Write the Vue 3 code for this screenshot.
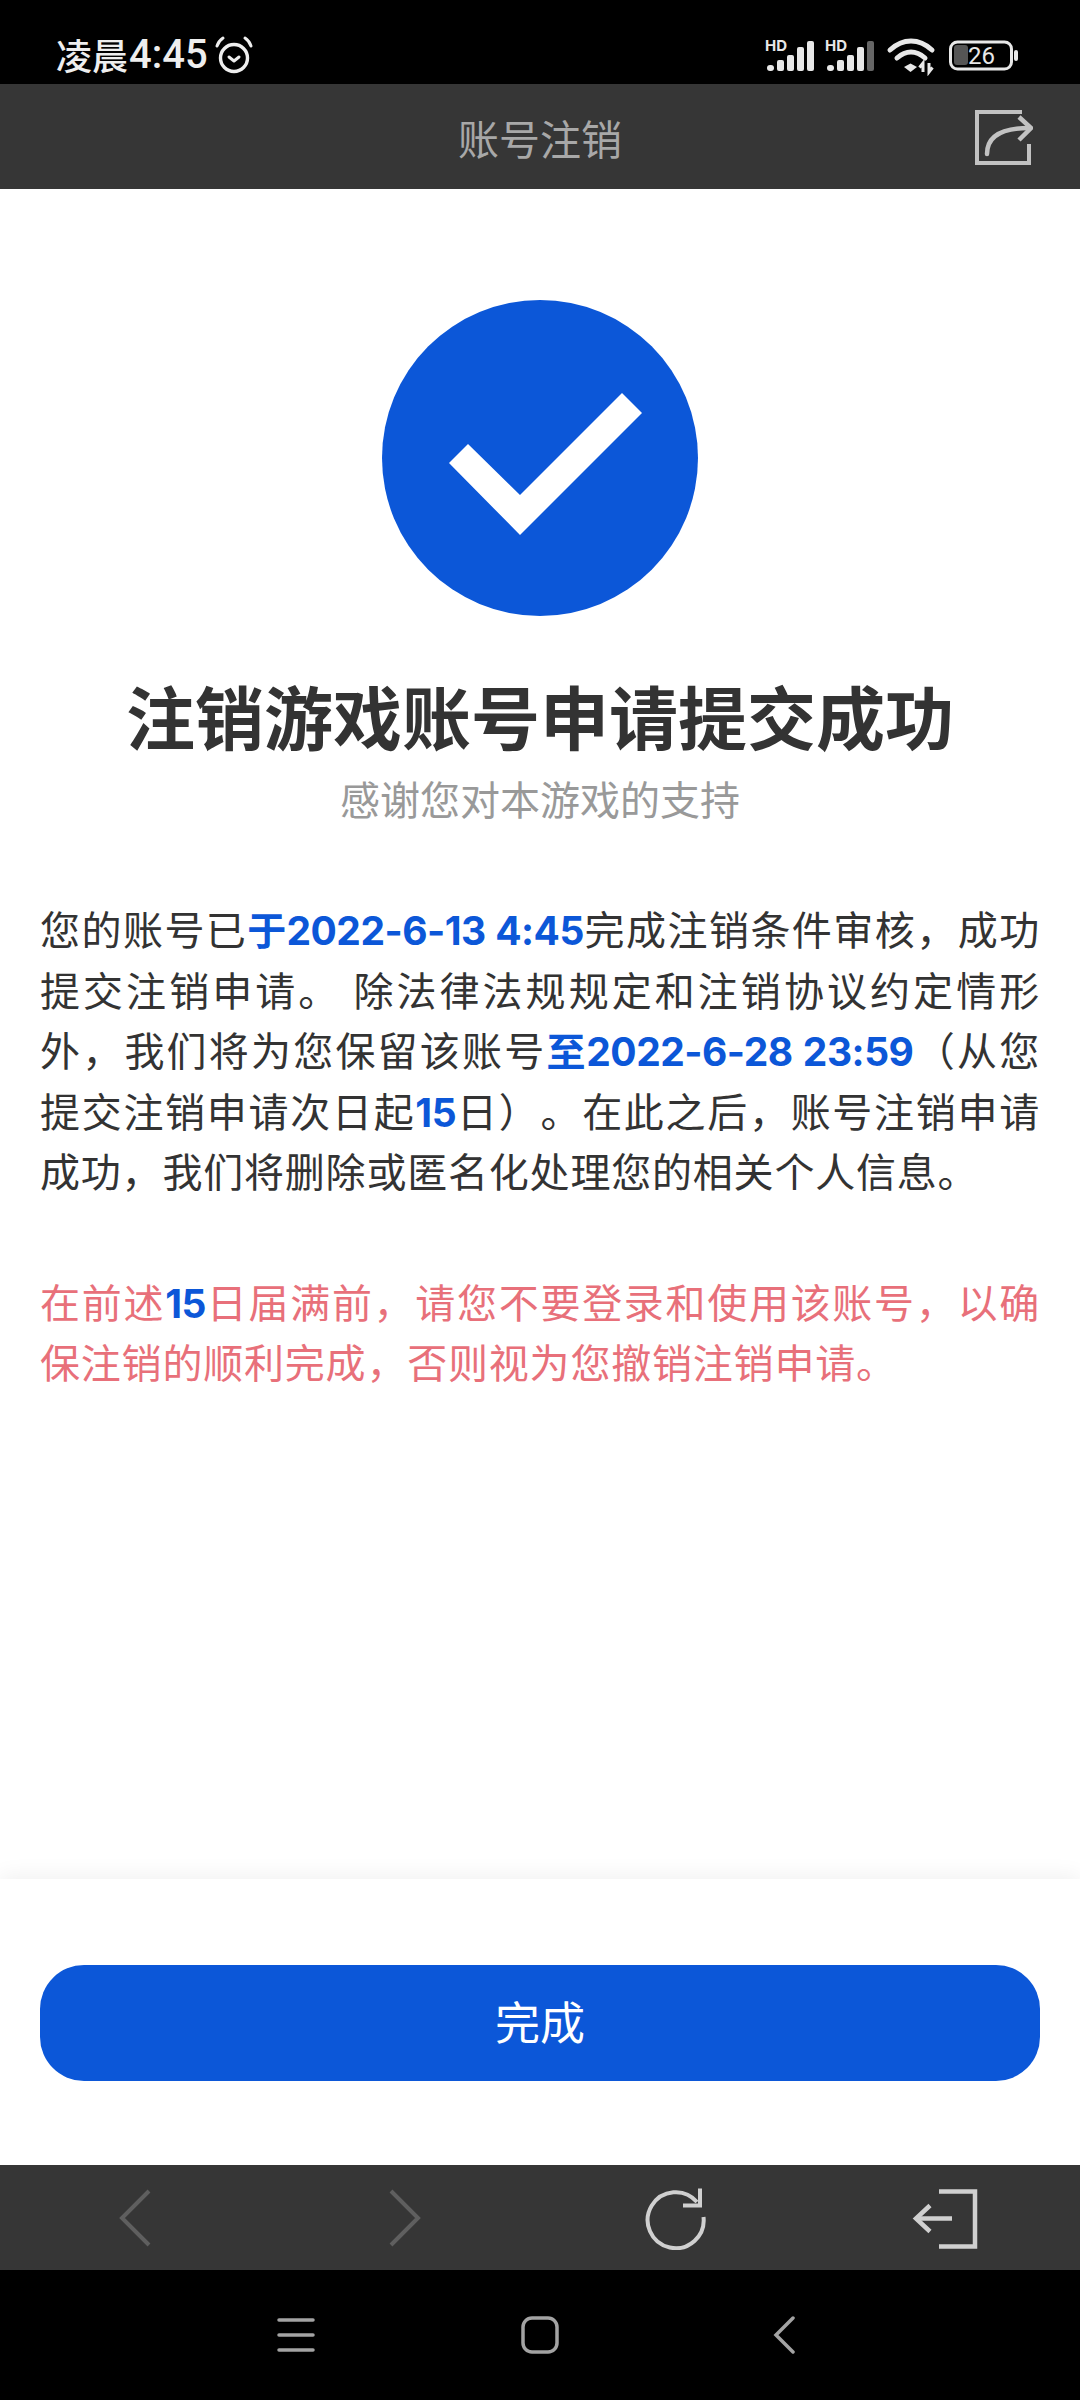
<template>
  <div class="page">
    <div class="status">
      <div class="clock">
        <span class="cn">凌晨</span><span class="num">4:45</span>
        <svg class="alarm" width="40" height="40" viewBox="0 0 40 40" fill="none" stroke="#eee">
          <circle cx="20" cy="24" r="13.500" stroke-width="3.400" />
          <path d="M15 23l5 4 5-4" stroke-width="3" stroke-linecap="round" stroke-linejoin="round" />
          <path d="M3 12c1-3 3-6 6-8M37 12c-1-3-3-6-6-8" stroke-width="3" stroke-linecap="round" />
        </svg>
      </div>
      <svg class="status-icons" width="260" height="40" viewBox="760 36 260 40">
        <text x="765" y="51" class="hd">HD</text>
        <text x="825" y="51" class="hd">HD</text>
        <g fill="#e8e8e8">
          <rect x="767" y="65" width="7" height="6" rx="3" />
          <rect x="777" y="60" width="7" height="11" rx="2" />
          <rect x="787" y="55" width="7" height="16" rx="2" />
          <rect x="797" y="47" width="7" height="24" rx="2" />
          <rect x="807" y="41" width="7" height="30" rx="2" />
          <rect x="827" y="65" width="7" height="6" rx="3" />
          <rect x="837" y="60" width="7" height="11" rx="2" />
          <rect x="847" y="55" width="7" height="16" rx="2" />
          <rect x="857" y="47" width="7" height="24" rx="2" />
          <rect x="867" y="41" width="7" height="30" rx="2" fill="#666" />
        </g>
        <g fill="none" stroke="#e8e8e8" stroke-width="5" stroke-linecap="round">
          <path d="M890 50c13-12 29-12 42 0" />
          <path d="M897 58c9-8 19-8 28 0" />
        </g>
        <path d="M904 67l6.500-3.500 6.500 3.500-6.500 5z" fill="#e8e8e8" />
        <path d="M923 72v-9l-3.500 4.500M929 63v9l3.500-4.500" fill="none" stroke="#e8e8e8" stroke-width="3" />
        <rect x="950.500" y="42" width="61" height="27" rx="7" fill="none" stroke="#e8e8e8" stroke-width="3" />
        <rect x="954" y="45" width="14" height="20" rx="3" fill="#555" />
        <text x="968" y="64" class="batt">26</text>
        <rect x="1014" y="50" width="4" height="11" rx="2" fill="#e8e8e8" />
      </svg>
    </div>

    <header class="titlebar">
      <span class="title">账号注销</span>
      <button class="share">
        <svg width="60" height="60" viewBox="0 0 60 60" fill="none" stroke="#c2c2c2" stroke-width="4">
          <path d="M49 4H4v51h52V36" />
          <path d="M14 46c0-16 12-26 42-26" stroke-width="4.500" stroke-linecap="round" />
          <path d="M46 9l12 11-12 12" stroke-width="4.500" />
        </svg>
      </button>
    </header>

    <main class="content">
      <svg class="check" width="318" height="318" viewBox="0 0 318 318">
        <circle cx="159" cy="159" r="158" fill="#0c57d8" />
        <path d="M68 164l19-19 52 51 102-102 20 20-122 122z" fill="#fff" />
      </svg>
      <h1>注销游戏账号申请提交成功</h1>
      <p class="sub">感谢您对本游戏的支持</p>

      <div class="body">
        <span class="line">您的账号已<b>于2022-6-13 4:45</b>完成注销条件审核，成功</span>
        <span class="line">提交注销申请。 除法律法规规定和注销协议约定情形</span>
        <span class="line">外，我们将为您保留该账号<b>至2022-6-28 23:59</b>（从您</span>
        <span class="line">提交注销申请次日起<b>15</b>日）。在此之后，账号注销申请</span>
        <span class="line last">成功，我们将删除或匿名化处理您的相关个人信息。</span>
      </div>

      <div class="body warn">
        <span class="line">在前述<b>15</b>日届满前，请您不要登录和使用该账号，以确</span>
        <span class="line last">保注销的顺利完成，否则视为您撤销注销申请。</span>
      </div>
    </main>

    <footer class="actions">
      <button class="done">完成</button>
    </footer>

    <div class="toolbar">
      <svg width="60" height="60" viewBox="0 0 60 60" fill="none" stroke="#5f5f5f" stroke-width="4">
        <path d="M44 3L17 30l27 27" />
      </svg>
      <svg width="60" height="60" viewBox="0 0 60 60" fill="none" stroke="#5f5f5f" stroke-width="4">
        <path d="M16 3l27 27-27 27" />
      </svg>
      <svg width="64" height="64" viewBox="0 0 64 64" fill="none" stroke="#d0d0d0" stroke-width="4">
        <path d="M60.500 31A28 28 0 1 1 54 16" />
        <path d="M57 2.500V19.500H40" />
      </svg>
      <svg width="68" height="64" viewBox="0 0 68 64" fill="none" stroke="#d0d0d0" stroke-width="4.500">
        <path d="M28 5.500H64V60.500H28" />
        <path d="M5 32.500H41" />
        <path d="M19 19.500L5 32.500l14 13" />
      </svg>
    </div>

    <nav class="sysnav">
      <svg width="38" height="36" viewBox="0 0 38 36" fill="none" stroke="#a3a3a3" stroke-width="3.500" stroke-linecap="round">
        <path d="M2 3h34M2 18h34M2 33h34" />
      </svg>
      <svg width="38" height="38" viewBox="0 0 38 38" fill="none" stroke="#a3a3a3" stroke-width="3.500">
        <rect x="2" y="2" width="34" height="34" rx="9" />
      </svg>
      <svg width="38" height="38" viewBox="0 0 38 38" fill="none" stroke="#a3a3a3" stroke-width="3.500" stroke-linecap="round">
        <path d="M27 2L10 19l17 17" />
      </svg>
    </nav>
  </div>
</template>

<script setup>
</script>

<style>
html, body { margin: 0; background: #000; }
</style>

<style scoped>
.page {
  width: 1080px; height: 2400px; display: flex; flex-direction: column;
  background: #fff; overflow: hidden;
  font-family: "Noto Sans CJK SC", "Noto Sans", sans-serif;
}
.status {
  height: 84px; flex: none; box-sizing: border-box; padding-top: 24px; background: #000;
  display: flex; align-items: center; justify-content: space-between;
}
.clock { display: flex; align-items: center; padding-left: 56px; color: #eee; }
.cn { font-size: 36px; font-weight: 500; }
.num { font: 500 40px Roboto, sans-serif; margin-left: 1px; }
.alarm { margin-left: 6px; }
.status-icons { margin-right: 60px; margin-top: 4px; }
.hd { font: 700 15px Inter, sans-serif; fill: #e8e8e8; }
.batt { font: 400 24px Roboto, sans-serif; fill: #e8e8e8; }

.titlebar {
  height: 105px; flex: none; background: #363636; position: relative;
  display: flex; align-items: center; justify-content: center;
}
.title { font-size: 41px; color: #a8a8a8; }
.share {
  position: absolute; right: 47px; top: 24px; padding: 0; background: none; border: 0;
  display: flex;
}

.content { flex: 1; padding: 0 40px; display: flex; flex-direction: column; align-items: center; }
.check { margin-top: 110px; flex: none; }
h1 {
  margin: 54px 0 0; font-size: 69px; line-height: 88px; font-weight: 700; color: #333;
}
.sub { margin: 11px 0 0; font-size: 40px; line-height: 56px; color: #999; }
.body {
  align-self: stretch; margin-top: 72px;
  font-size: 40px; line-height: 60.500px; color: #333; letter-spacing: .8px;
  text-spacing-trim: space-all;
}
.line { display: block; white-space: nowrap; text-align: justify; text-align-last: justify; }
.line.last { text-align-last: left; }
.body b {
  color: #0c57d8; font-weight: 700; font-size: 39px; line-height: 0; letter-spacing: -.5px;
  font-family: Inter, "Noto Sans CJK SC", sans-serif;
}
.warn { margin-top: 70px; color: #e8707a; }

.actions {
  height: 286px; flex: none; box-sizing: border-box; padding: 86px 40px 0; background: #fff;
  box-shadow: 0 -4px 20px rgba(0, 0, 0, .06);
}
.done {
  display: block; width: 100%; height: 116px; border: 0; border-radius: 44px; padding: 0 0 6px;
  background: #0c57d8; color: #fff; font: 400 45px "Noto Sans CJK SC", sans-serif;
}

.toolbar {
  height: 105px; flex: none; background: #363636;
  display: grid; grid-template-columns: repeat(4, 1fr); align-items: center; justify-items: center;
}
.sysnav {
  height: 130px; flex: none; background: #000;
  display: flex; align-items: center; justify-content: center; gap: 206.500px;
}
</style>
